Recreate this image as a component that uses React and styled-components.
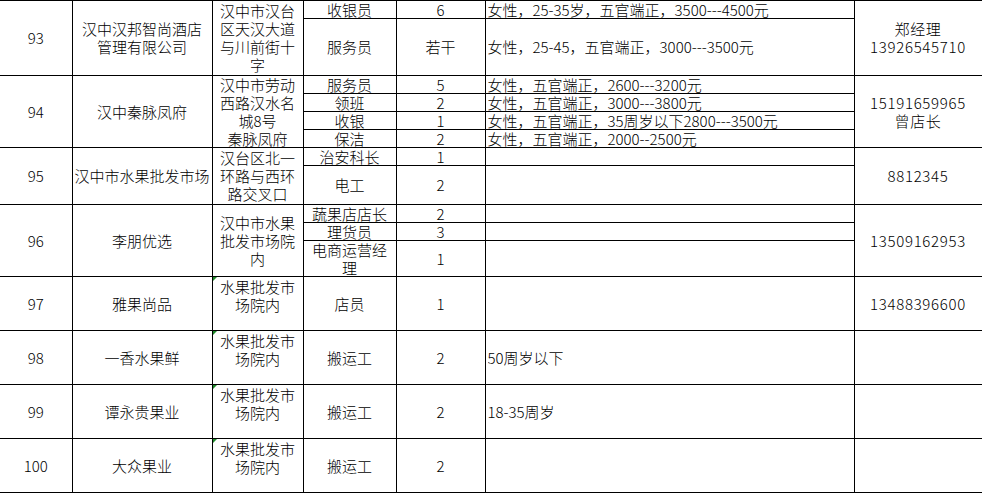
import React from 'react';
import styled, { createGlobalStyle } from 'styled-components';

const GlobalStyle = createGlobalStyle`
  html, body {
    margin: 0;
    padding: 0;
    background: #fff;
  }
  body {
    font-family: "Noto Sans CJK SC", "Noto Sans", sans-serif;
    font-weight: 300;
    color: #000;
  }
`;

const Sheet = styled.table`
  border-collapse: collapse;
  table-layout: fixed;
  width: 982px;
  font-size: 15px;
  line-height: 18px;
`;

const Row = styled.tr`
  height: ${(p) => p.$h}px;
`;

const Cell = styled.td`
  border: 1px solid #000;
  border-left: ${(p) => (p.$edge ? 'none' : '1px solid #000')};
  padding: ${(p) => (p.$top ? '1px 2px 0' : '0 2px')};
  text-align: ${(p) => (p.$left ? 'left' : 'center')};
  vertical-align: ${(p) => (p.$top ? 'top' : 'middle')};
  letter-spacing: ${(p) => (p.$digits ? '0.7px' : 'normal')};
  white-space: nowrap;
  position: relative;

  &::before {
    content: '';
    display: ${(p) => (p.$flag ? 'block' : 'none')};
    position: absolute;
    left: 0;
    top: 0;
    border-top: 4px solid #1f8a2a;
    border-right: 4px solid transparent;
  }
`;

const Fit = styled.div`
  max-height: ${(p) => p.$max}px;
  overflow: hidden;
`;

const Line = styled.span`
  display: block;
`;

const groups = [
  {
    id: '93',
    company: ['汉中汉邦智尚酒店', '管理有限公司'],
    address: ['汉中市汉台', '区天汉大道', '与川前街十', '字'],
    contact: ['郑经理', '13926545710'],
    jobs: [
      { h: 18, title: ['收银员'], count: '6', desc: '女性，25-35岁，五官端正，3500---4500元' },
      { h: 57, title: ['服务员'], count: '若干', desc: '女性，25-45，五官端正，3000---3500元' },
    ],
  },
  {
    id: '94',
    company: ['汉中秦脉凤府'],
    address: ['汉中市劳动', '西路汉水名', '城8号', '秦脉凤府'],
    contact: ['15191659965', '曾店长'],
    jobs: [
      { h: 18, title: ['服务员'], count: '5', desc: '女性，五官端正，2600---3200元' },
      { h: 18, title: ['领班'], count: '2', desc: '女性，五官端正，3000---3800元' },
      { h: 18, title: ['收银'], count: '1', desc: '女性，五官端正，35周岁以下2800---3500元' },
      { h: 18, title: ['保洁'], count: '2', desc: '女性，五官端正，2000--2500元' },
    ],
  },
  {
    id: '95',
    company: ['汉中市水果批发市场'],
    address: ['汉台区北一', '环路与西环', '路交叉口'],
    contact: ['8812345'],
    jobs: [
      { h: 18, title: ['治安科长'], count: '1', desc: '' },
      { h: 39, title: ['电工'], count: '2', desc: '' },
    ],
  },
  {
    id: '96',
    company: ['李朋优选'],
    address: ['汉中市水果', '批发市场院', '内'],
    contact: ['13509162953'],
    jobs: [
      { h: 18, title: ['蔬果店店长'], count: '2', desc: '' },
      { h: 18, title: ['理货员'], count: '3', desc: '' },
      { h: 36, title: ['电商运营经', '理'], count: '1', desc: '' },
    ],
  },
  {
    id: '97',
    company: ['雅果尚品'],
    address: ['水果批发市', '场院内'],
    flag: true,
    contact: ['13488396600'],
    jobs: [{ h: 54, title: ['店员'], count: '1', desc: '' }],
  },
  {
    id: '98',
    company: ['一香水果鲜'],
    address: ['水果批发市', '场院内'],
    flag: true,
    contact: [],
    jobs: [{ h: 54, title: ['搬运工'], count: '2', desc: '50周岁以下' }],
  },
  {
    id: '99',
    company: ['谭永贵果业'],
    address: ['水果批发市', '场院内'],
    flag: true,
    contact: [],
    jobs: [{ h: 54, title: ['搬运工'], count: '2', desc: '18-35周岁' }],
  },
  {
    id: '100',
    company: ['大众果业'],
    address: ['水果批发市', '场院内'],
    flag: true,
    contact: [],
    jobs: [{ h: 54, title: ['搬运工'], count: '2', desc: '' }],
  },
];

const Lines = ({ items }) => items.map((t, i) => <Line key={i}>{t}</Line>);

export default function App() {
  return (
    <>
      <GlobalStyle />
      <Sheet>
        <colgroup>
          <col style={{ width: 72 }} />
          <col style={{ width: 140 }} />
          <col style={{ width: 91 }} />
          <col style={{ width: 93 }} />
          <col style={{ width: 89 }} />
          <col style={{ width: 369 }} />
          <col style={{ width: 128 }} />
        </colgroup>
        <tbody>
          {groups.map((g) => {
            const span = g.jobs.length;
            const total = g.jobs.reduce((s, j) => s + j.h, 0) - 1;
            return g.jobs.map((job, i) => (
              <Row key={g.id + '-' + i} $h={job.h}>
                {i === 0 && (
                  <>
                    <Cell rowSpan={span} $edge>
                      <Fit $max={total}>{g.id}</Fit>
                    </Cell>
                    <Cell rowSpan={span}>
                      <Fit $max={total}><Lines items={g.company} /></Fit>
                    </Cell>
                    <Cell rowSpan={span} $top={g.flag} $flag={g.flag}>
                      <Fit $max={total}><Lines items={g.address} /></Fit>
                    </Cell>
                  </>
                )}
                <Cell>
                  <Fit $max={job.h - 1}><Lines items={job.title} /></Fit>
                </Cell>
                <Cell>
                  <Fit $max={job.h - 1}>{job.count}</Fit>
                </Cell>
                <Cell $left>
                  <Fit $max={job.h - 1}>{job.desc}</Fit>
                </Cell>
                {i === 0 && (
                  <Cell rowSpan={span} $digits>
                    <Fit $max={total}><Lines items={g.contact} /></Fit>
                  </Cell>
                )}
              </Row>
            ));
          })}
        </tbody>
      </Sheet>
    </>
  );
}
